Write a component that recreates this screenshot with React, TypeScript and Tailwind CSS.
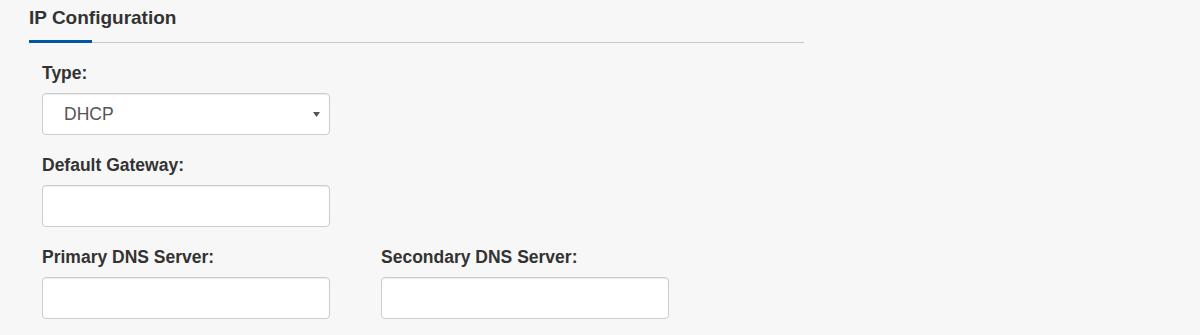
import { useState } from "react";

type FieldProps = {
  label: string;
  id: string;
  children: React.ReactNode;
};

function Field({ label, id, children }: FieldProps) {
  return (
    <div className="w-[288px]">
      <label htmlFor={id} className="mb-[10px] block text-[17.5px] font-bold leading-[20px] text-[#333]">
        {label}
      </label>
      {children}
    </div>
  );
}

const inputClass =
  "block h-[42px] w-full rounded-[4px] border border-[#ccc] bg-white px-[21px] text-[17.5px] text-[#555] shadow-[inset_0_1px_1px_rgba(0,0,0,0.075)] outline-none";

export default function App() {
  const [type, setType] = useState("DHCP");
  const [gateway, setGateway] = useState("");
  const [dns1, setDns1] = useState("");
  const [dns2, setDns2] = useState("");

  return (
    <div className="min-h-[335px] bg-[#f7f7f7] font-['Liberation_Sans',Arial,sans-serif]">
      <section className="ml-[29px] w-[775px] pt-[6px]">
        <h2 className="text-[19px] font-bold leading-[23px] text-[#333]">IP Configuration</h2>
        <div className="mt-[11px] flex items-end">
          <div className="h-[3px] w-[63px] bg-[#0057a6]" />
          <div className="h-px flex-1 bg-[#c8c8c8]" />
        </div>

        <div className="mt-[20px] flex flex-col gap-[20px] pl-[13px]">
          <Field label="Type:" id="ip-type">
            <div className="relative">
              <select
                id="ip-type"
                value={type}
                onChange={(e) => setType(e.target.value)}
                className={`${inputClass} appearance-none`}
              >
                <option value="DHCP">DHCP</option>
                <option value="Static">Static</option>
              </select>
              <svg
                className="pointer-events-none absolute right-[10px] top-[19px]"
                width="7"
                height="5"
                viewBox="0 0 7 5"
                aria-hidden="true"
              >
                <path d="M0 0h7L3.5 5z" fill="#555" />
              </svg>
            </div>
          </Field>

          <Field label="Default Gateway:" id="ip-gateway">
            <input id="ip-gateway" value={gateway} onChange={(e) => setGateway(e.target.value)} className={inputClass} />
          </Field>

          <div className="flex gap-[51px]">
            <Field label="Primary DNS Server:" id="ip-dns1">
              <input id="ip-dns1" value={dns1} onChange={(e) => setDns1(e.target.value)} className={inputClass} />
            </Field>
            <Field label="Secondary DNS Server:" id="ip-dns2">
              <input id="ip-dns2" value={dns2} onChange={(e) => setDns2(e.target.value)} className={inputClass} />
            </Field>
          </div>
        </div>
      </section>
    </div>
  );
}
